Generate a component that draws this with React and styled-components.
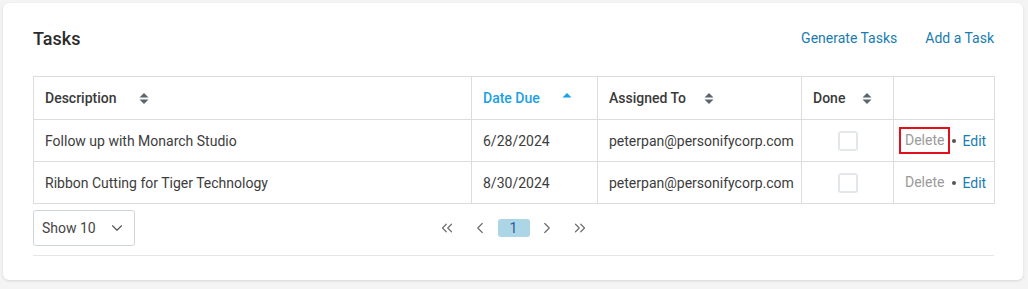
import React from "react";
import styled, { createGlobalStyle } from "styled-components";
import { ChevronDown, ChevronLeft, ChevronRight, ChevronsLeft, ChevronsRight } from "lucide-react";

const Global = createGlobalStyle`
  html, body { margin: 0; padding: 0; background: #f4f4f4; }
  body { font-family: Roboto, "Liberation Sans", sans-serif; color: #333; }
  * { box-sizing: border-box; }
`;

const Page = styled.div`
  padding: 3px 5px 9px 3px;
`;

const Card = styled.section`
  background: #fff;
  border-radius: 6px;
  box-shadow: 0 1px 3px rgba(0,0,0,0.12);
  padding: 22px 29px 24px 30px;
`;

const Header = styled.div`
  display: flex;
  align-items: center;
  justify-content: space-between;
  height: 26px;
  margin-bottom: 25px;
`;

const Title = styled.h2`
  margin: 0;
  font-size: 18px;
  font-weight: 500;
  color: #2b2b2b;
`;

const Actions = styled.div`
  display: flex;
  gap: 28px;
`;

const Link = styled.a`
  font-size: 14px;
  color: #1a7cb0;
  text-decoration: none;
  cursor: pointer;
`;

const Table = styled.table`
  width: 961px;
  border-collapse: collapse;
  table-layout: fixed;
  font-size: 14px;
`;

const Th = styled.th`
  height: 43px;
  border: 1px solid #dcdcdc;
  text-align: left;
  padding: 0 11px;
  font-weight: 500;
  color: ${p => (p.$active ? "#1aa0e6" : "#3a3a3a")};
  width: ${p => p.$w}px;
`;

const ThInner = styled.span`
  display: flex;
  align-items: center;
  gap: ${p => p.$gap}px;
`;

const Td = styled.td`
  height: 42px;
  border: 1px solid #dcdcdc;
  padding: 0 11px;
  color: #3c3c3c;
  text-align: ${p => p.$align || "left"};
`;

const Checkbox = styled.span`
  display: inline-block;
  width: 20px;
  height: 20px;
  border: 2px solid #e3e6ea;
  border-radius: 3px;
  vertical-align: middle;
`;

const RowActions = styled.span`
  display: inline-flex;
  align-items: center;
  margin-left: -6px;
`;

const DeleteLink = styled.a`
  color: #9a9a9a;
  padding: 3px 4px 4px;
  border: 2px solid ${p => (p.$highlight ? "#e3101c" : "transparent")};
  cursor: pointer;
`;

const Dot = styled.span`
  width: 4px;
  height: 4px;
  border-radius: 50%;
  background: #555;
  margin: 0 6px 0 2px;
`;

const EditLink = styled.a`
  color: #1a7cb0;
  cursor: pointer;
`;

const Footer = styled.div`
  display: grid;
  grid-template-columns: 1fr auto 1fr;
  align-items: center;
  margin-top: 6px;
  padding-bottom: 9px;
  border-bottom: 1px solid #e6e6e6;
  width: 961px;
`;

const Select = styled.div`
  width: 102px;
  height: 36px;
  border: 1px solid #cfd4da;
  border-radius: 3px;
  display: flex;
  align-items: center;
  justify-content: space-between;
  padding: 0 8px 0 8px;
  font-size: 14px;
  color: #444;
`;

const Pager = styled.div`
  display: flex;
  align-items: center;
`;

const PageBtn = styled.span`
  width: 33px;
  height: 18px;
  display: flex;
  align-items: center;
  justify-content: center;
  color: #6e6e6e;
  font-size: 14px;
  border-radius: 3px;
  background: ${p => (p.$current ? "#acd6e5" : "transparent")};
  ${p => p.$current && "color: #2a5aa0; width: 32px; margin: 0 1px;"}
`;

const SortIcon = ({ dir }) => (
  <svg width="10" height="13" viewBox="0 0 10 13">
    {dir !== "down" && (
      <path d="M5 1 L9.5 5.5 L0.5 5.5 Z" fill={dir === "up" ? "#1aa0e6" : "#5b6570"} />
    )}
    {dir === undefined && <path d="M5 12 L9.5 7.5 L0.5 7.5 Z" fill="#5b6570" />}
  </svg>
);

const rows = [
  { desc: "Follow up with Monarch Studio", due: "6/28/2024", who: "peterpan@personifycorp.com", hl: true },
  { desc: "Ribbon Cutting for Tiger Technology", due: "8/30/2024", who: "peterpan@personifycorp.com", hl: false },
];

export default function App() {
  return (
    <>
      <Global />
      <Page>
        <Card>
          <Header>
            <Title>Tasks</Title>
            <Actions>
              <Link>Generate Tasks</Link>
              <Link>Add a Task</Link>
            </Actions>
          </Header>
          <Table>
            <thead>
              <tr>
                <Th $w={438}><ThInner $gap={22}>Description <SortIcon /></ThInner></Th>
                <Th $w={126} $active><ThInner $gap={22}>Date Due <SortIcon dir="up" /></ThInner></Th>
                <Th $w={204}><ThInner $gap={18}>Assigned To <SortIcon /></ThInner></Th>
                <Th $w={92}><ThInner $gap={17}>Done <SortIcon /></ThInner></Th>
                <Th $w={101}></Th>
              </tr>
            </thead>
            <tbody>
              {rows.map((r, i) => (
                <tr key={i}>
                  <Td>{r.desc}</Td>
                  <Td>{r.due}</Td>
                  <Td>{r.who}</Td>
                  <Td $align="center"><Checkbox /></Td>
                  <Td>
                    <RowActions>
                      <DeleteLink $highlight={r.hl}>Delete</DeleteLink>
                      <Dot />
                      <EditLink>Edit</EditLink>
                    </RowActions>
                  </Td>
                </tr>
              ))}
            </tbody>
          </Table>
          <Footer>
            <Select>
              Show 10 <ChevronDown size={18} strokeWidth={1.5} color="#555" />
            </Select>
            <Pager>
              <PageBtn><ChevronsLeft size={18} strokeWidth={1.6} /></PageBtn>
              <PageBtn><ChevronLeft size={18} strokeWidth={1.6} /></PageBtn>
              <PageBtn $current>1</PageBtn>
              <PageBtn><ChevronRight size={18} strokeWidth={1.6} /></PageBtn>
              <PageBtn><ChevronsRight size={18} strokeWidth={1.6} /></PageBtn>
            </Pager>
            <span />
          </Footer>
        </Card>
      </Page>
    </>
  );
}
